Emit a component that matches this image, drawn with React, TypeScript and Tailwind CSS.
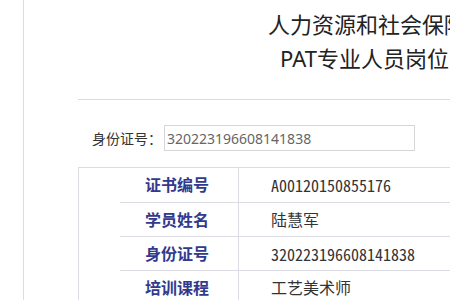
const rows = [
  { label: "证书编号", value: "A00120150855176", mono: true },
  { label: "学员姓名", value: "陆慧军", mono: false },
  { label: "身份证号", value: "320223196608141838", mono: true },
  { label: "培训课程", value: "工艺美术师", mono: false },
];

const cjk = "font-['Noto_Sans','Noto_Sans_CJK_SC',sans-serif]";

export default function App() {
  return (
    <div className={`flex h-[300px] w-[450px] overflow-hidden bg-white ${cjk}`}>
      <div className="w-[23px] shrink-0" />
      <div className="min-w-0 flex-1 border-l border-[#dddddd] pl-[54px]">
        {/* header */}
        <div className="border-b border-[#dcdcdc] pb-[24px] pt-[7px] text-[22px] leading-[34px] text-[#222] whitespace-nowrap">
          <div className="pl-[190px]">人力资源和社会保障部教育培训中心</div>
          <div className="pl-[202px]">PAT专业人员岗位能力证书查询</div>
        </div>

        {/* search */}
        <div className="mt-[25px] flex items-center pl-[14px] whitespace-nowrap">
          <span className="mr-[2px] text-[14px] text-[#333]">身份证号：</span>
          <div className="flex h-[26px] w-[251px] items-center border border-[#d6d6d6] pl-[2px] text-[14px] text-[#666]">
            320223196608141838
          </div>
        </div>

        {/* result table */}
        <div className="mt-[16px] border-l border-t border-[#dcdce4] whitespace-nowrap">
          {rows.map((r, i) => (
            <div key={r.label} className="flex">
              <div className="w-[160px] shrink-0 border-r border-[#dcdce4] pl-[41px]">
                <div
                  className={`flex items-center justify-end border-b border-[#dcdce4] pr-[29px] text-[16px] font-bold text-[#323a8e] ${
                    i === 0 ? "h-[35px]" : "h-[34px]"
                  }`}
                >
                  {r.label}
                </div>
              </div>
              <div
                className={`flex flex-1 items-center border-b border-[#dcdce4] pl-[32px] text-[16px] text-[#333] ${
                  i === 0 ? "h-[35px]" : "h-[34px]"
                } ${r.mono ? "font-['Noto_Sans_Mono_CJK_SC','DejaVu_Sans_Mono',monospace] text-[15.5px]" : ""}`}
              >
                {r.value}
              </div>
            </div>
          ))}
        </div>
      </div>
    </div>
  );
}
